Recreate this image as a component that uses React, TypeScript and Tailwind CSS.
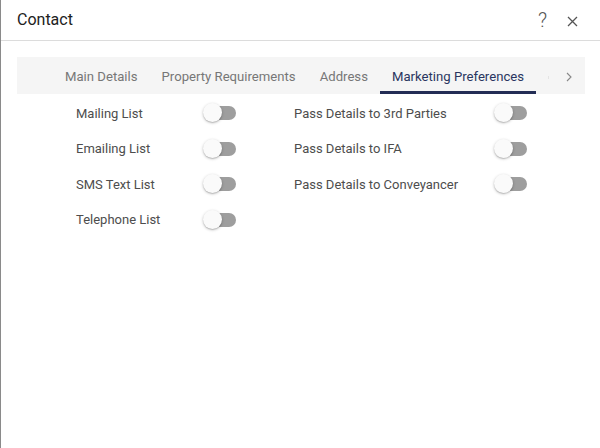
import React from "react";

const leftPrefs = ["Mailing List", "Emailing List", "SMS Text List", "Telephone List"];
const rightPrefs = ["Pass Details to 3rd Parties", "Pass Details to IFA", "Pass Details to Conveyancer"];
const tabs = ["Main Details", "Property Requirements", "Address", "Marketing Preferences"];

function Toggle() {
  return (
    <div className="relative w-[34px] h-[20px] flex items-center shrink-0">
      <div className="absolute left-[1px] right-[1px] h-[14px] rounded-full bg-[#9e9e9e]" />
      <div className="absolute left-0 top-0 w-[19px] h-[19px] rounded-full bg-[#fafafa] shadow-[0_1px_3px_rgba(0,0,0,0.25),0_1px_1px_rgba(0,0,0,0.12)]" />
    </div>
  );
}

function PrefRow({ label, width }: { label: string; width: string }) {
  return (
    <div className="h-[35.5px] flex items-center">
      <span className={`${width} text-[13px] text-[#4d4d4d]`}>{label}</span>
      <Toggle />
    </div>
  );
}

export default function App() {
  return (
    <div
      className="w-[600px] h-[448px] bg-white border-l border-[#8a8a8a] overflow-hidden"
      style={{ fontFamily: "Roboto, 'Liberation Sans', sans-serif" }}
    >
      <div className="h-[41px] flex items-center justify-between pl-[16px] pr-[22px] border-b border-[#dcdcdc]">
        <span className="text-[16px] text-[#212121]">Contact</span>
        <div className="flex items-center gap-[20px] text-[#555]">
          <span className="text-[20px] font-light leading-none">?</span>
          <svg width="11" height="11" viewBox="0 0 11 11" className="mt-[2px]">
            <path d="M1 1 L10 10 M10 1 L1 10" stroke="#555" strokeWidth="1.3" />
          </svg>
        </div>
      </div>

      <div className="mt-[16px] ml-[16px] mr-[15px] h-[37px] bg-[#f5f5f5] flex">
        <div className="w-[36px]" />
        {tabs.map((t, i) => {
          const active = i === tabs.length - 1;
          return (
            <div
              key={t}
              className={`px-[12px] flex items-center text-[13.15px] border-b-[3px] ${
                active ? "border-[#232d55] text-[#2a3560]" : "border-transparent text-[#777]"
              }`}
            >
              <span className="pt-[5px]">{t}</span>
            </div>
          );
        })}
        <div className="w-[17px] flex items-center pt-[4px]">
          <div className="ml-[12px] w-[1px] h-[3px] bg-[#e4e4e4]" />
        </div>
        <div className="flex-1 flex items-center justify-center pt-[2px]">
          <svg width="6" height="10" viewBox="0 0 6 10">
            <path d="M1 1 L5 5 L1 9" fill="none" stroke="#888" strokeWidth="1.1" />
          </svg>
        </div>
      </div>

      <div className="flex pl-[75px] pt-[1.5px]">
        <div className="w-[218px] flex flex-col">
          {leftPrefs.map((p) => (
            <PrefRow key={p} label={p} width="w-[127px]" />
          ))}
        </div>
        <div className="flex flex-col">
          {rightPrefs.map((p) => (
            <PrefRow key={p} label={p} width="w-[200px]" />
          ))}
        </div>
      </div>
    </div>
  );
}
